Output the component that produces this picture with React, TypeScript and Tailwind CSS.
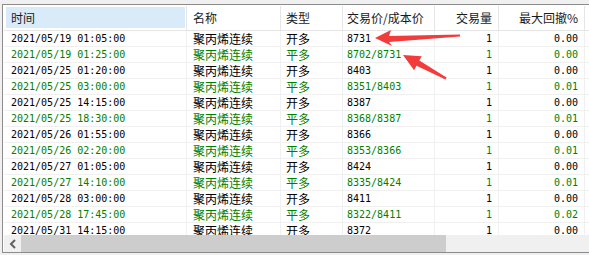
import React from "react";

type Row = { time: string; kind: string; price: string; qty: string; dd: string };

const rows: Row[] = [
  { time: "2021/05/19 01:05:00", kind: "开多", price: "8731", qty: "1", dd: "0.00" },
  { time: "2021/05/19 01:25:00", kind: "平多", price: "8702/8731", qty: "1", dd: "0.00" },
  { time: "2021/05/25 01:20:00", kind: "开多", price: "8403", qty: "1", dd: "0.00" },
  { time: "2021/05/25 03:00:00", kind: "平多", price: "8351/8403", qty: "1", dd: "0.01" },
  { time: "2021/05/25 14:15:00", kind: "开多", price: "8387", qty: "1", dd: "0.00" },
  { time: "2021/05/25 18:30:00", kind: "平多", price: "8368/8387", qty: "1", dd: "0.01" },
  { time: "2021/05/26 01:55:00", kind: "开多", price: "8366", qty: "1", dd: "0.00" },
  { time: "2021/05/26 02:20:00", kind: "平多", price: "8353/8366", qty: "1", dd: "0.01" },
  { time: "2021/05/27 01:05:00", kind: "开多", price: "8424", qty: "1", dd: "0.00" },
  { time: "2021/05/27 14:10:00", kind: "平多", price: "8335/8424", qty: "1", dd: "0.01" },
  { time: "2021/05/28 03:00:00", kind: "开多", price: "8411", qty: "1", dd: "0.00" },
  { time: "2021/05/28 17:45:00", kind: "平多", price: "8322/8411", qty: "1", dd: "0.02" },
  { time: "2021/05/31 14:15:00", kind: "开多", price: "8372", qty: "1", dd: "0.00" },
];

const cjk = "font-['Noto_Sans_CJK_SC',sans-serif] text-[12px]";
const mono = "font-['DejaVu_Sans_Mono','Noto_Sans_CJK_SC',monospace] text-[10px]";

// list header, first column shown as the hot (sorted) one
function Header() {
  const cell = "h-full flex items-center border-r border-[#e5e5e5] " + cjk;
  return (
    <div className="flex h-[25px] border-b border-[#e5e5e5] text-[#1a1a1a]">
      <div className="w-[183px] h-full border-r border-[#e5e5e5] pt-[1px] pr-[1px] pb-[2px] pl-[2px]">
        <div className={"h-full flex items-center bg-[#d9ebf9] pl-[5px] " + cjk}>时间</div>
      </div>
      <div className={cell + " w-[94px] pl-[6px]"}>名称</div>
      <div className={cell + " w-[62px] pl-[5px]"}>类型</div>
      <div className={cell + " w-[92px] pl-[4px]"}>交易价/成本价</div>
      <div className={cell + " w-[64px] justify-end pr-[6px]"}>交易量</div>
      <div className={cell + " w-[86px] justify-end pr-[6px]"}>最大回撤%</div>
    </div>
  );
}

function DataRow({ r }: { r: Row }) {
  const color = r.kind === "平多" ? "text-[#008000]" : "text-black";
  const cell = "h-full flex items-center border-r border-[#f0f0f0] whitespace-pre ";
  return (
    <div className={"flex h-[16px] border-b border-[#f0f0f0] " + color}>
      <div className={cell + mono + " w-[183px] pl-[7px]"}>{r.time}</div>
      <div className={cell + cjk + " w-[94px] pl-[6px]"}>聚丙烯连续</div>
      <div className={cell + cjk + " w-[62px] pl-[5px]"}>{r.kind}</div>
      <div className={cell + mono + " w-[92px] pl-[4px]"}>{r.price}</div>
      <div className={cell + mono + " w-[64px] justify-end pr-[6px]"}>{r.qty}</div>
      <div className={cell + mono + " w-[86px] justify-end pr-[6px]"}>{r.dd}</div>
    </div>
  );
}

function ScrollBar() {
  return (
    <div className="flex h-[17px]">
      <div className="w-[17px] h-full bg-[#f0f0f0] flex items-center justify-center">
        <svg width="8" height="10" viewBox="0 0 8 10">
          <path d="M6 1 L2 5 L6 9" stroke="#606060" strokeWidth="2" fill="none" />
        </svg>
      </div>
      <div className="w-[425px] h-full bg-[#cdcdcd]" />
      <div className="flex-1 h-full bg-[#f0f0f0]" />
    </div>
  );
}

export default function App() {
  return (
    <div className="relative w-[589px] h-[255px] overflow-hidden bg-[#f0f0f0] pt-[4px] pl-[2px]">
      <div className="w-[620px] bg-white border-l border-t border-b border-[#8c8c8c] pl-[1px] pt-[1px]">
        <Header />
        <div className="h-[204px] overflow-hidden">
          {rows.map((r) => (
            <DataRow key={r.time} r={r} />
          ))}
        </div>
        <ScrollBar />
      </div>

      {/* red annotation arrows */}
      <svg className="absolute left-0 top-0 pointer-events-none" width="589" height="255">
        <polygon
          points="375,38 391,30 389,36 460,34.5 460,36.5 389,42 392,46"
          fill="#f23b3b"
        />
        <polygon
          points="403,55 421.7,56.2 419.3,60.6 446.5,77.6 445.5,79.4 416.5,65.8 414.1,70.2"
          fill="#f23b3b"
        />
      </svg>
    </div>
  );
}
